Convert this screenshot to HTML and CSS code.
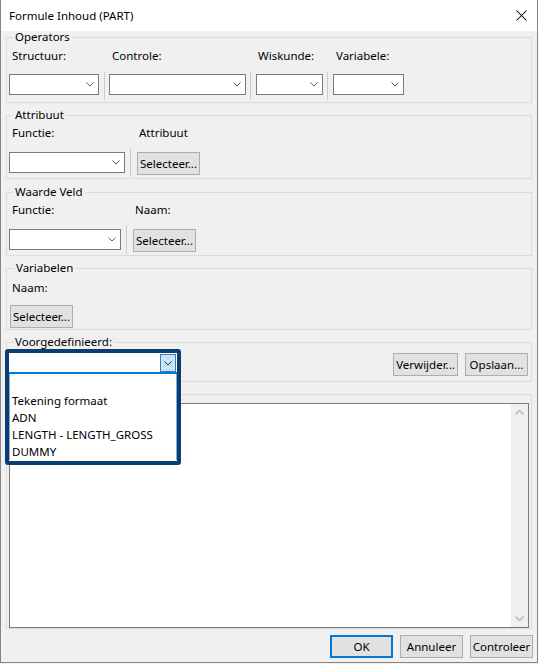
FILE: index.html
```html
<!DOCTYPE html>
<html>
<head>
<meta charset="utf-8">
<title>Formule Inhoud (PART)</title>
<link rel="stylesheet" href="styles.css">
</head>
<body>
<div class="window">
  <div class="titlebar">
    <span class="title">Formule Inhoud (PART)</span>
    <svg class="close" width="11" height="11" viewBox="0 0 11 11"><path d="M0.5 0.5L10.5 10.5M10.5 0.5L0.5 10.5" stroke="#000" stroke-width="1.05" fill="none"/></svg>
  </div>
  <div class="content">
    <fieldset class="group g-ops">
      <legend>Operators</legend>
      <div class="grid grid-ops">
        <span class="lbl">Structuur:</span><span></span>
        <span class="lbl">Controle:</span><span></span>
        <span class="lbl lbl-tight">Wiskunde:</span><span></span>
        <span class="lbl">Variabele:</span>
        <div class="combo"><svg width="8" height="5" viewBox="0 0 8 5"><path d="M0.5 0.5L4 4L7.5 0.5" stroke="#5a5a5a" fill="none"/></svg></div>
        <div class="sep sep-ops"></div>
        <div class="combo"><svg width="8" height="5" viewBox="0 0 8 5"><path d="M0.5 0.5L4 4L7.5 0.5" stroke="#5a5a5a" fill="none"/></svg></div>
        <div class="sep sep-ops sep-l4"></div>
        <div class="combo"><svg width="8" height="5" viewBox="0 0 8 5"><path d="M0.5 0.5L4 4L7.5 0.5" stroke="#5a5a5a" fill="none"/></svg></div>
        <div class="sep sep-ops sep-l4"></div>
        <div class="combo"><svg width="8" height="5" viewBox="0 0 8 5"><path d="M0.5 0.5L4 4L7.5 0.5" stroke="#5a5a5a" fill="none"/></svg></div>
      </div>
    </fieldset>

    <fieldset class="group g-attr">
      <legend>Attribuut</legend>
      <div class="grid grid-attr">
        <span class="lbl">Functie:</span><span></span>
        <span class="lbl lbl-tight">Attribuut</span>
        <div class="combo"><svg width="8" height="5" viewBox="0 0 8 5"><path d="M0.5 0.5L4 4L7.5 0.5" stroke="#5a5a5a" fill="none"/></svg></div>
        <div class="sep sep-tall"></div>
        <button class="btn">Selecteer...</button>
      </div>
    </fieldset>

    <fieldset class="group g-waarde">
      <legend>Waarde Veld</legend>
      <div class="grid grid-waarde">
        <span class="lbl">Functie:</span><span></span>
        <span class="lbl lbl-tight">Naam:</span>
        <div class="combo"><svg width="8" height="5" viewBox="0 0 8 5"><path d="M0.5 0.5L4 4L7.5 0.5" stroke="#5a5a5a" fill="none"/></svg></div>
        <div class="sep sep-tall"></div>
        <button class="btn">Selecteer...</button>
      </div>
    </fieldset>

    <fieldset class="group g-var">
      <legend>Variabelen</legend>
      <div class="stack">
        <span class="lbl lbl-var">Naam:</span>
        <button class="btn">Selecteer...</button>
      </div>
    </fieldset>

    <fieldset class="group g-voor">
      <legend>Voorgedefinieerd:</legend>
      <div class="voor-row">
        <div class="combo combo-voor"></div>
        <div class="voor-btns">
          <button class="btn btn-verw">Verwijder...</button>
          <button class="btn">Opslaan...</button>
        </div>
      </div>
    </fieldset>

    <fieldset class="group g-text">
      <div class="textbox">
        <div class="text-area"></div>
        <div class="scrollbar">
          <svg width="17" height="17" viewBox="0 0 17 17"><path d="M4.5 10.5L8.5 6.5L12.5 10.5" stroke="#c2c2c2" stroke-width="1.8" fill="none"/></svg>
          <svg width="17" height="17" viewBox="0 0 17 17"><path d="M4.5 6.5L8.5 10.5L12.5 6.5" stroke="#c2c2c2" stroke-width="1.8" fill="none"/></svg>
        </div>
      </div>
    </fieldset>

    <div class="footer">
      <button class="btn btn-ok">OK</button>
      <button class="btn">Annuleer</button>
      <button class="btn">Controleer</button>
    </div>
  </div>
</div>

<div class="dropdown">
  <div class="dd-field">
    <div class="dd-arrow"><svg width="8" height="5" viewBox="0 0 8 5"><path d="M0.5 0.5L4 4L7.5 0.5" stroke="#1c3f66" fill="none"/></svg></div>
  </div>
  <ul class="dd-list">
    <li class="dd-item"></li>
    <li class="dd-item">Tekening formaat</li>
    <li class="dd-item">ADN</li>
    <li class="dd-item">LENGTH - LENGTH_GROSS</li>
    <li class="dd-item">DUMMY</li>
  </ul>
</div>
</body>
</html>
```

FILE: styles.css
```css
html, body {
  margin: 0;
  padding: 0;
}

body {
  width: 538px;
  height: 664px;
  background: #f0f0f0;
  font-family: "Noto Sans", "Liberation Sans", sans-serif;
  font-size: 11.5px;
  color: #000;
  position: relative;
  overflow: hidden;
}

.window {
  height: 663px;
  box-sizing: border-box;
  border: 1px solid #858585;
  border-top: none;
  background: #f0f0f0;
}

.titlebar {
  height: 31px;
  background: #fff;
  display: flex;
  align-items: center;
  justify-content: space-between;
  padding: 0 10px 0 8px;
}

.title {
  font-size: 11.5px;
  line-height: 16px;
}

.close {
  display: block;
}

.content {
  padding: 0 5px;
}

.group {
  margin: 5px 0 0;
  padding: 0 2px;
  border: 1px solid #dcdcdc;
  min-width: 0;
}

.group legend {
  margin-left: 4px;
  padding: 0 2px;
  height: 14px;
  line-height: 14px;
}

.g-ops {
  margin-top: -1px;
  padding-top: 5px;
  padding-bottom: 7px;
}

.g-attr {
  padding-top: 4px;
  padding-bottom: 3px;
}

.g-waarde {
  margin-top: 6px;
  padding-top: 4px;
  padding-bottom: 3px;
}

.g-var {
  padding-top: 6px;
  padding-bottom: 1px;
  padding-left: 3px;
}

.g-voor {
  padding: 3px 3px 5px 2px;
}

.g-text {
  margin-top: 12px;
  padding: 8px 2px 0;
}

.grid {
  display: grid;
  align-items: start;
}

.grid-ops {
  grid-template-columns: 90px 10px 137px 10px 67px 10px 71px;
  row-gap: 11px;
}

.grid-attr {
  grid-template-columns: 116px 12px 63px;
  row-gap: 12px;
}

.grid-waarde {
  grid-template-columns: 112px 12px 63px;
  row-gap: 12px;
}

.lbl {
  line-height: 14px;
  height: 14px;
  padding-left: 3px;
  white-space: nowrap;
}

.lbl-tight {
  padding-left: 2px;
}

.lbl-var {
  padding-left: 2px;
}

.stack {
  display: flex;
  flex-direction: column;
  align-items: flex-start;
  gap: 10px;
}

.combo {
  height: 21px;
  box-sizing: border-box;
  border: 1px solid #7a7a7a;
  background: #fff;
  display: flex;
  align-items: center;
  justify-content: flex-end;
  padding-right: 4px;
}

.combo svg {
  display: block;
}

.sep {
  width: 1px;
  background: #cdcdcd;
  justify-self: start;
}

.sep-ops {
  height: 28px;
  margin: -2px 0 -5px 5px;
}

.sep-l4 {
  margin-left: 4px;
}

.sep-tall {
  height: 29px;
  margin: -4px 0 -2px 5px;
}

.btn {
  height: 23px;
  width: 63px;
  box-sizing: border-box;
  border: 1px solid #adadad;
  background: #e1e1e1;
  font-family: inherit;
  font-size: 11.5px;
  color: #000;
  padding: 0;
  margin: 0;
  line-height: 21px;
  white-space: nowrap;
}

.btn-verw {
  width: 65px;
}

.btn-ok {
  border: 2px solid #0078d7;
  line-height: 19px;
}

.voor-row {
  display: flex;
  align-items: flex-start;
  justify-content: space-between;
}

.combo-voor {
  width: 168px;
}

.voor-btns {
  display: flex;
  gap: 7px;
  margin-top: 1px;
}

.textbox {
  height: 225px;
  box-sizing: border-box;
  border: 1px solid #7a7a7a;
  background: #fff;
  display: flex;
}

.text-area {
  flex: 1;
}

.scrollbar {
  width: 17px;
  background: #f0f0f0;
  display: flex;
  flex-direction: column;
  justify-content: space-between;
}

.scrollbar svg {
  display: block;
}

.footer {
  display: flex;
  justify-content: flex-end;
  gap: 7px;
  margin-top: 6px;
  margin-right: -1px;
}

.dropdown {
  position: absolute;
  left: 5px;
  top: 349px;
  width: 176px;
  height: 116px;
  box-sizing: border-box;
  border: 4px solid #0d3c71;
  border-radius: 3px;
  background: #fff;
}

.dd-field {
  height: 21px;
  box-sizing: border-box;
  border-bottom: 2px solid #0078d7;
  display: flex;
  justify-content: flex-end;
  align-items: flex-start;
  padding: 1px 1px 0 0;
}

.dd-arrow {
  width: 16px;
  height: 18px;
  box-sizing: border-box;
  border: 1px solid #3d7ab8;
  background: #cce4f7;
  display: flex;
  align-items: center;
  justify-content: center;
}

.dd-arrow svg {
  display: block;
}

.dd-list {
  list-style: none;
  margin: 0;
  padding: 1px 0 0;
  border-left: 1px solid #7aaedf;
  border-right: 1px solid #7aaedf;
}

.dd-item {
  height: 17px;
  line-height: 17px;
  padding-left: 2px;
  white-space: nowrap;
}
```
